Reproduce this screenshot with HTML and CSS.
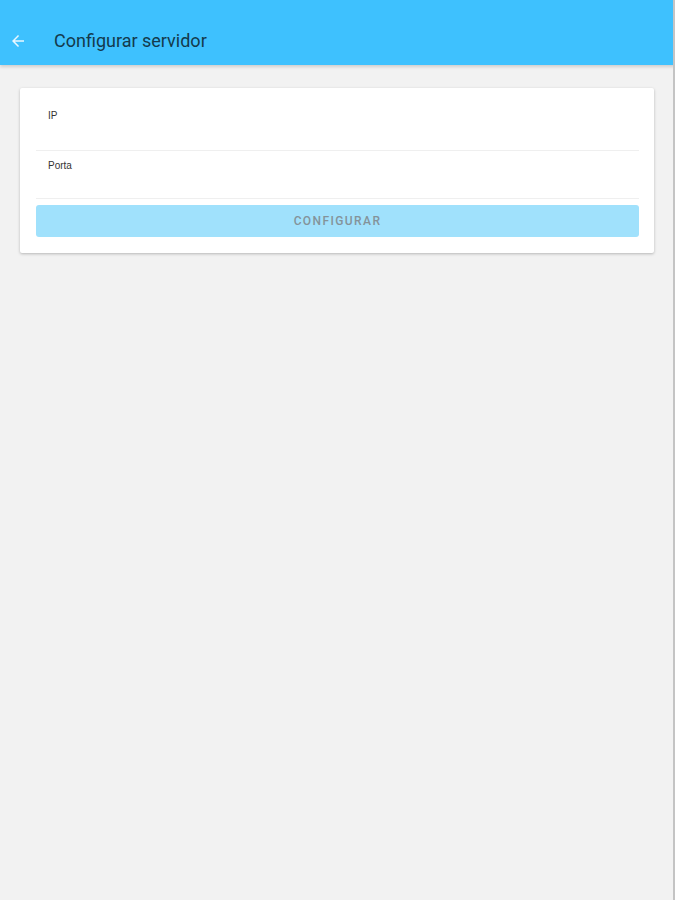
FILE: index.html
```html
<!DOCTYPE html>
<html lang="pt">
<head>
    <meta charset="UTF-8">
    <meta name="viewport" content="width=device-width, initial-scale=1.0">
    <title>Configurar servidor</title>
    <link rel="stylesheet" href="styles.css">
</head>
<body>
    <header class="toolbar">
        <button class="back" aria-label="Voltar">
            <svg width="18" height="18" viewBox="0 0 24 24"><path d="M20 11H7.83l5.59-5.59L12 4l-8 8 8 8 1.41-1.41L7.83 13H20v-2z" fill="#e8f7ff"/></svg>
        </button>
        <h1 class="title">Configurar servidor</h1>
    </header>

    <main class="content">
        <form class="card">
            <label class="field">
                <span class="label">IP</span>
                <input type="text" name="ip">
            </label>
            <label class="field">
                <span class="label">Porta</span>
                <input type="text" name="porta">
            </label>
            <button type="submit" class="submit" disabled>CONFIGURAR</button>
        </form>
    </main>
</body>
</html>
```

FILE: styles.css
```css
html, body {
    height: 100%;
}
body {
    margin: 0;
    font-family: Roboto, "Liberation Sans", Arial, sans-serif;
    background: #f2f2f2;
    border-right: 2px solid #c4c4c4;
    box-sizing: border-box;
}
.toolbar {
    height: 65px;
    background: #3ec1fe;
    display: flex;
    align-items: center;
    padding-top: 16px;
    box-sizing: border-box;
    box-shadow: 0 2px 3px rgba(0, 0, 0, 0.15);
    margin-right: -2px;
}
.back {
    width: 36px;
    height: 36px;
    border: none;
    background: none;
    display: flex;
    align-items: center;
    justify-content: center;
    padding: 0;
}
.title {
    margin: 0 0 0 18px;
    font-size: 18px;
    font-weight: 400;
    color: #143a4c;
}
.content {
    padding: 23px 19px 0 20px;
}
.card {
    background: #fff;
    border-radius: 2px;
    box-shadow: 0 1px 3px rgba(0, 0, 0, 0.25);
    padding: 0 15px 16px 16px;
    display: flex;
    flex-direction: column;
}
.field {
    display: flex;
    flex-direction: column;
    border-bottom: 1px solid #efefef;
    padding: 22px 12px 0;
    height: 63px;
    box-sizing: border-box;
}
.field + .field {
    height: 48px;
    padding-top: 9px;
}
.label {
    font-family: "Liberation Sans", Arial, sans-serif;
    font-size: 10px;
    color: #333;
}
.field input {
    border: none;
    outline: none;
    background: transparent;
    font: inherit;
    padding: 0;
}
.submit {
    margin-top: 6px;
    height: 32px;
    border: none;
    border-radius: 3px;
    background: #a0e1fc;
    color: #84939a;
    font-family: inherit;
    font-size: 12px;
    font-weight: 500;
    letter-spacing: 1.4px;
}
```
